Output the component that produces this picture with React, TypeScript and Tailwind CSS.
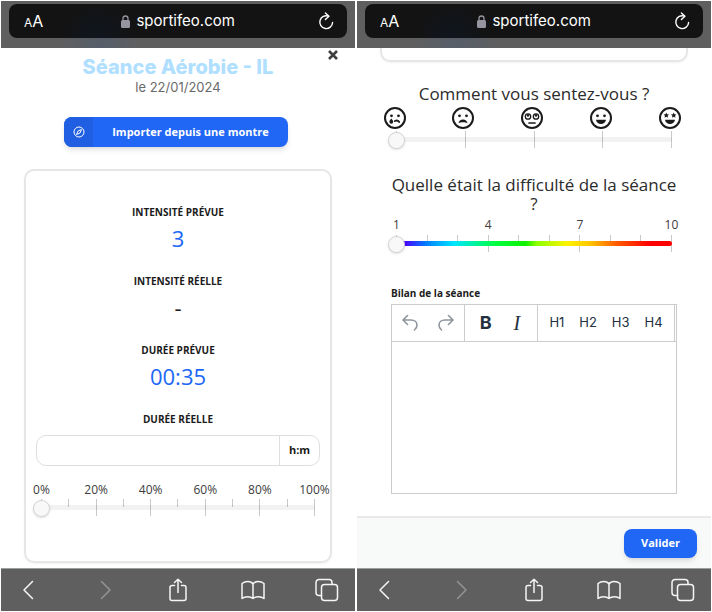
import React, { useState } from 'react'

const PERCENTS = ['0%', '20%', '40%', '60%', '80%', '100%']
const DIFFICULTIES = ['1', '4', '7', '10']
const HEADINGS = ['H1', 'H2', 'H3', 'H4']

function AddressBar() {
  return (
    <header className="bg-[#5f5f5f] bg-[radial-gradient(circle_at_28%_100%,#555e6a_0,#5f5f5f_40px)] px-2 pt-[3px] pb-[10px] font-['Inter',sans-serif] text-white">
      <div className="flex h-[34px] items-center justify-between rounded-lg bg-[#131313] bg-[radial-gradient(circle_at_26%_100%,#10161f_0,#131313_36px)] pr-3 pl-[15px]">
        <button type="button" className="flex items-baseline" aria-label="Format">
          <span className="text-xs">A</span>
          <span className="text-base">A</span>
        </button>
        <div className="flex items-center gap-1.5 pr-1">
          <svg width="9" height="13" viewBox="0 0 9 13" aria-hidden="true">
            <rect y="5" width="9" height="8" rx="1.5" fill="#96949f" />
            <path
              d="M2 6V3.5a2.5 2.5 0 0 1 5 0V6"
              fill="none"
              stroke="#96949f"
              strokeWidth="1.3"
            />
          </svg>
          <span className="text-[15px]">sportifeo.com</span>
        </div>
        <button type="button" aria-label="Recharger">
          <svg
            width="18"
            height="18"
            viewBox="0 0 18 18"
            fill="none"
            stroke="currentColor"
            strokeWidth="1.4"
            strokeLinecap="round"
            strokeLinejoin="round"
          >
            <path d="M11.5 4.2A6.4 6.4 0 1 0 15.6 10.5" />
            <path d="M8.4 1l3.5 3.2-3.5 3.4" />
          </svg>
        </button>
      </div>
    </header>
  )
}

function BrowserButton({
  label,
  dim,
  children,
}: {
  label: string
  dim?: boolean
  children: React.ReactNode
}) {
  return (
    <button
      type="button"
      aria-label={label}
      className={dim ? 'text-[#949494]' : 'text-[#f5f5f5]'}
    >
      <svg
        width="24"
        height="24"
        viewBox="0 0 24 24"
        fill="none"
        stroke="currentColor"
        strokeWidth="1.5"
        strokeLinecap="round"
        strokeLinejoin="round"
      >
        {children}
      </svg>
    </button>
  )
}

function BrowserNav() {
  return (
    <nav className="flex h-[43px] items-center justify-between border-t border-[#9a9f9f] bg-[#5f5f5f] px-4">
      <BrowserButton label="Précédent">
        <path d="M15.500 3.500L7 12l8.500 8.500" />
      </BrowserButton>
      <BrowserButton label="Suivant" dim>
        <path d="M9.500 3.500L18 12l-8.500 8.500" />
      </BrowserButton>
      <BrowserButton label="Partager">
        <path d="M8.500 7.500H6a2 2 0 0 0-2 2v11a2 2 0 0 0 2 2h12a2 2 0 0 0 2-2v-11a2 2 0 0 0-2-2h-2.500" />
        <path d="M12 14.500V1.500M8.500 4.500L12 1.200l3.500 3.300" />
      </BrowserButton>
      <BrowserButton label="Signets">
        <path d="M12 20.500V6C11 4.300 9 3.500 6.800 3.500S2.500 4.300 1 5.500v15c1.500-1.200 3.500-1.700 5.500-1.700s4.200.5 5.500 1.700c1.300-1.200 3.500-1.700 5.500-1.700s4 .5 5.500 1.700v-15c-1.500-1.200-3.600-2-5.800-2S13 4.300 12 6" />
      </BrowserButton>
      <BrowserButton label="Onglets">
        <path d="M6.500 17.500H4a3 3 0 0 1-3-3V4.500a3 3 0 0 1 3-3h10a3 3 0 0 1 3 3v1.500" />
        <rect x="6.500" y="6.500" width="16" height="16" rx="3" />
      </BrowserButton>
    </nav>
  )
}

interface SliderProps {
  label: string
  min: number
  max: number
  steps: number
  majorEvery: number
  trackClass: string
}

function Slider({ label, min, max, steps, majorEvery, trackClass }: SliderProps) {
  const [value, setValue] = useState(min)
  const ticks = Array.from({ length: steps + 1 }, (_, i) => i)

  return (
    <div className="relative h-[18px]">
      <div className="absolute inset-x-2 top-0 flex justify-between">
        {ticks.map((i) => (
          <span
            key={i}
            className={
              i % majorEvery === 0
                ? 'h-[17px] w-px bg-[#c8c8c8]'
                : 'h-2 w-px bg-[#c8c8c8]'
            }
          />
        ))}
      </div>
      <div className={`absolute inset-x-2 top-[6px] h-[5px] rounded-full ${trackClass}`} />
      <input
        type="range"
        aria-label={label}
        min={min}
        max={max}
        value={value}
        onChange={(e) => setValue(Number(e.target.value))}
        className="relative block h-[18px] w-full appearance-none bg-transparent [&::-webkit-slider-thumb]:h-[17px] [&::-webkit-slider-thumb]:w-[17px] [&::-webkit-slider-thumb]:appearance-none [&::-webkit-slider-thumb]:rounded-full [&::-webkit-slider-thumb]:border [&::-webkit-slider-thumb]:border-[#d4d4d4] [&::-webkit-slider-thumb]:bg-[#f8f8f8] [&::-webkit-slider-thumb]:shadow-sm"
      />
    </div>
  )
}

function ScaleLabels({ labels }: { labels: string[] }) {
  return (
    <div className="flex justify-between px-2 text-xs text-[#3c3c3c]">
      {labels.map((text) => (
        <span key={text} className="flex w-px justify-center">
          {text}
        </span>
      ))}
    </div>
  )
}

function Stat({
  label,
  value,
  planned,
}: {
  label: string
  value: string
  planned?: boolean
}) {
  return (
    <div className="mb-[21px] text-center">
      <dt className="text-[10px] leading-4 font-bold uppercase">{label}</dt>
      <dd
        className={
          planned
            ? 'pt-1 text-[22px] leading-7 text-[#2167f6]'
            : 'pt-1 text-[22px] leading-7'
        }
      >
        {value}
      </dd>
    </div>
  )
}

function Face({ children }: { children: React.ReactNode }) {
  return (
    <svg
      width="24"
      height="24"
      viewBox="0 0 24 24"
      fill="none"
      stroke="#1b1b1b"
      strokeLinecap="round"
      className="shrink-0"
      aria-hidden="true"
    >
      <circle cx="12" cy="12" r="10" strokeWidth="2" />
      {children}
    </svg>
  )
}

const dots = (
  <g fill="#1b1b1b" stroke="none">
    <circle cx="8.500" cy="9.800" r="1.400" />
    <circle cx="15.500" cy="9.800" r="1.400" />
  </g>
)
const grin = (
  <path d="M7 13.800h10c-.3 2.700-2.400 4.200-5 4.200s-4.700-1.500-5-4.200z" fill="#1b1b1b" stroke="none" />
)
const STAR = 'M0-2.800l.8 1.800 2 .2-1.500 1.300.5 2L0 1.500l-1.800 1 .5-2L-2.800-.8l2-.2z'

function FaceScale() {
  return (
    <div className="flex justify-between pr-[10px] pl-[6px]">
      <span className="flex w-px justify-center">
        <Face>
          {dots}
          <path d="M8.300 12.600c1.200 1.400 1.900 2.200 1.900 3.200a1.900 1.900 0 0 1-3.800 0c0-1 .7-1.800 1.900-3.200z" fill="#1b1b1b" stroke="none" />
          <path d="M11.800 15c1.800-.9 3.400-.5 4.400 1.100" strokeWidth="1.800" />
        </Face>
      </span>
      <span className="flex w-px justify-center">
        <Face>
          {dots}
          <path d="M7.500 17.300c.3-2.500 2.200-3.800 4.500-3.800s4.200 1.300 4.500 3.800c-1.300-.8-2.800-1-4.500-1s-3.200.2-4.500 1z" fill="#1b1b1b" stroke="none" />
        </Face>
      </span>
      <span className="flex w-px justify-center">
        <Face>
          <circle cx="8" cy="10.500" r="2.700" strokeWidth="1.300" />
          <circle cx="16" cy="10.500" r="2.700" strokeWidth="1.300" />
          <g fill="#1b1b1b" stroke="none">
            <circle cx="8" cy="9.500" r="1.200" />
            <circle cx="16" cy="9.500" r="1.200" />
          </g>
          <path d="M9 17h6" strokeWidth="1.700" />
        </Face>
      </span>
      <span className="flex w-px justify-center">
        <Face>
          {dots}
          {grin}
        </Face>
      </span>
      <span className="flex w-px justify-center">
        <Face>
          <g fill="#1b1b1b" stroke="none">
            <path d={STAR} transform="translate(8.300 9.300)" />
            <path d={STAR} transform="translate(15.700 9.300)" />
          </g>
          {grin}
        </Face>
      </span>
    </div>
  )
}

function SessionScreen() {
  const [duration, setDuration] = useState('')

  return (
    <section className="flex flex-col bg-white">
      <AddressBar />
      <main className="relative flex-1 px-[23px] pt-2 pb-[5px]">
        <button type="button" aria-label="Fermer" className="absolute top-[2px] right-[17px]">
          <svg width="10" height="10" viewBox="0 0 10 10" stroke="#3f3f3f" strokeWidth="2.600">
            <path d="M1 1l8 8M9 1L1 9" />
          </svg>
        </button>
        <div className="text-center font-['Inter',sans-serif]">
          <h1 className="text-xl leading-[22px] font-extrabold text-[#b0dfff]">
            Séance Aérobie - IL
          </h1>
          <p className="text-[13px] leading-[18px] text-[#6a6a6a]">le 22/01/2024</p>
        </div>
        <div className="flex justify-center pt-[21px] pr-1">
          <button
            type="button"
            className="flex h-[30px] items-center overflow-hidden rounded-lg bg-[#2167f6] pr-[19px] text-[11px] font-bold text-white shadow-md"
          >
            <span className="mr-[19px] flex h-full w-[29px] items-center justify-center bg-[#205fe2]">
              <svg width="12" height="12" viewBox="0 0 12 12" fill="none" stroke="currentColor">
                <circle cx="6" cy="6" r="5" />
                <path d="M8.500 3.500L7 7 3.500 8.500 5 5z" strokeLinejoin="round" />
              </svg>
            </span>
            Importer depuis une montre
          </button>
        </div>

        <div className="mt-[22px] rounded-[10px] border-2 border-[#e6e6e6] px-[7px] pt-[33px] pb-11 shadow-xs">
          <dl>
            <Stat label="Intensité prévue" value="3" planned />
            <Stat label="Intensité réelle" value="-" />
            <Stat label="Durée prévue" value="00:35" planned />
          </dl>
          <label
            htmlFor="duration"
            className="block text-center text-[10px] leading-4 font-bold uppercase"
          >
            Durée réelle
          </label>
          <div className="mx-[3px] mt-2 flex h-[31px] rounded-[10px] border border-[#dedede]">
            <input
              id="duration"
              type="text"
              value={duration}
              onChange={(e) => setDuration(e.target.value)}
              className="min-w-0 flex-1 bg-transparent px-3 text-xs outline-none"
            />
            <span className="flex w-10 items-center justify-center border-l border-[#dedede] text-[11px] font-bold">
              h:m
            </span>
          </div>
          <div className="pt-4">
            <ScaleLabels labels={PERCENTS} />
            <div className="pt-px">
              <Slider
                label="Pourcentage de la durée"
                min={0}
                max={100}
                steps={10}
                majorEvery={2}
                trackClass="bg-black/5"
              />
            </div>
          </div>
        </div>
      </main>
      <BrowserNav />
    </section>
  )
}

function FeedbackScreen() {
  const [report, setReport] = useState('')

  return (
    <section className="flex flex-col bg-white">
      <AddressBar />
      <main className="flex-1 px-[23px]">
        <div className="h-[14px] rounded-b-[10px] border-2 border-t-0 border-[#e6e6e6] shadow-xs" />
        <div className="px-2">
          <h2 className="pt-[22px] text-center text-[17px] leading-[19px] text-[#2b2b2b]">
            Comment vous sentez-vous ?
          </h2>
          <div className="pt-[3px] pb-px">
            <FaceScale />
          </div>
          <Slider
            label="Comment vous sentez-vous ?"
            min={1}
            max={5}
            steps={4}
            majorEvery={1}
            trackClass="bg-black/5"
          />
          <h2 className="pt-[26px] text-center text-[17px] leading-[19px] text-[#2b2b2b]">
            Quelle était la difficulté de la séance ?
          </h2>
          <div className="pt-1">
            <ScaleLabels labels={DIFFICULTIES} />
            <div className="pt-[2px]">
              <Slider
                label="Difficulté de la séance"
                min={1}
                max={10}
                steps={9}
                majorEvery={3}
                trackClass="bg-[linear-gradient(90deg,#4b00ff_3%,#0080ff_11%,#00e5ff_21%,#00ff40_36%,#10f000_47%,#8cff00_51%,#fff200_62%,#ffc800_70%,#ff5a00_80%,#ff0000_92%)]"
              />
            </div>
          </div>
        </div>
        <div className="px-[11px] pt-[31px] pb-[22px]">
          <label htmlFor="report" className="block text-[10px] leading-[18px] font-bold">
            Bilan de la séance
          </label>
          <div className="mt-[2px] border border-[#cccccc]">
            <div className="flex h-[37px] border-b border-[#cccccc] font-['Inter',sans-serif] text-[#222f3e]">
              <div className="flex w-[73px] items-center justify-around border-r border-[#cccccc] text-[#8f959c]">
                <button type="button" aria-label="Annuler">
                  <svg width="16" height="18" viewBox="0 0 16 18" fill="none" stroke="currentColor" strokeWidth="1.600" strokeLinecap="round" strokeLinejoin="round">
                    <path d="M5.500 1.500L1 6l4.500 4.500M1.500 6H9c3.500 0 6 2 6 5 0 2-1 3.800-2.500 5" />
                  </svg>
                </button>
                <button type="button" aria-label="Rétablir">
                  <svg width="16" height="18" viewBox="0 0 16 18" fill="none" stroke="currentColor" strokeWidth="1.600" strokeLinecap="round" strokeLinejoin="round">
                    <path d="M10.500 1.500L15 6l-4.500 4.500M14.500 6H7c-3.500 0-6 2-6 5 0 2 1 3.800 2.500 5" />
                  </svg>
                </button>
              </div>
              <div className="flex w-[73px] items-center justify-around border-r border-[#cccccc] pr-1.5 pl-1">
                <button type="button" aria-label="Gras" className="text-lg font-bold">
                  B
                </button>
                <button
                  type="button"
                  aria-label="Italique"
                  className="font-['Liberation_Serif',serif] text-xl italic"
                >
                  I
                </button>
              </div>
              <div className="flex flex-1 items-center justify-around border-r border-[#cccccc] px-1 text-[13px]">
                {HEADINGS.map((text) => (
                  <button key={text} type="button">
                    {text}
                  </button>
                ))}
              </div>
              <div className="w-px" />
            </div>
            <textarea
              id="report"
              value={report}
              onChange={(e) => setReport(e.target.value)}
              className="block h-[151px] w-full resize-none p-3 text-sm outline-none"
            />
          </div>
        </div>
      </main>
      <footer className="flex justify-end border-t-2 border-[#e9e9e9] bg-[#f8fafa] px-[14px] pt-[11px] pb-[10px]">
        <button
          type="button"
          className="h-[29px] rounded-lg bg-[#2167f6] px-[17px] text-[11px] font-bold text-white shadow-md"
        >
          Valider
        </button>
      </footer>
      <BrowserNav />
    </section>
  )
}

const App: React.FC = () => {
  return (
    <div className="grid min-h-screen grid-cols-2 gap-0.5 bg-white p-px font-['Open_Sans',sans-serif] text-[#1b1b1b]">
      <SessionScreen />
      <FeedbackScreen />
    </div>
  )
}

export default App
